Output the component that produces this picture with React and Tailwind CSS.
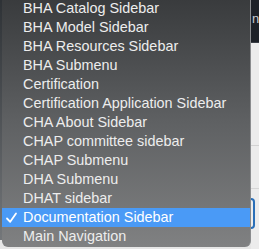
import React from "react";

const items = [
  "BHA Catalog Sidebar",
  "BHA Model Sidebar",
  "BHA Resources Sidebar",
  "BHA Submenu",
  "Certification",
  "Certification Application Sidebar",
  "CHA About Sidebar",
  "CHAP committee sidebar",
  "CHAP Submenu",
  "DHA Submenu",
  "DHAT sidebar",
  "Documentation Sidebar",
  "Main Navigation",
];

const selected = "Documentation Sidebar";

const Check = () => (
  <svg
    width="14"
    height="19"
    viewBox="0 0 14 19"
    className="absolute left-[3px] top-0"
    fill="none"
  >
    <polyline
      points="2,10.5 5.2,13.8 11,5.5"
      stroke="#ffffff"
      strokeWidth="1.8"
      strokeLinecap="round"
      strokeLinejoin="round"
    />
  </svg>
);

const App = () => {
  return (
    <div className="w-[259px] h-[249px] overflow-hidden bg-[#e6e6e6] flex font-['Liberation_Sans',Arial,sans-serif]">
      {/* strip left of the menu */}
      <div className="w-[2px] h-[240px] bg-gradient-to-b from-[#2e3236] to-[#74777a]" />

      {/* popup menu */}
      <div className="w-[249px] h-[248px] -mt-px pb-px flex flex-col rounded-b-[6px] bg-gradient-to-b from-[#393b3d] via-[#5f6163] to-[#808182] border-r border-[#8a8c8e] overflow-hidden">
        {items.map((item) => {
          const active = item === selected;
          return (
            <div
              key={item}
              className={`relative h-[19px] shrink-0 pl-[21px] text-[14.4px] leading-[19px] whitespace-nowrap ${
                active ? "bg-[#4a9af6] text-white" : "text-[#ededed]"
              }`}
            >
              {active && <Check />}
              {item}
            </div>
          );
        })}
      </div>

      {/* page behind, right of the menu */}
      <div className="w-[8px] flex flex-col">
        <div className="h-[43px] bg-[#1d2127] border-b border-[#3a3f46] overflow-hidden pt-[12px] pl-px">
          <span className="block text-[13px] leading-[14px] text-[#c8ccd2]">n</span>
        </div>
        <div className="flex-1 flex flex-col bg-[#ececec]">
          <div className="h-[103px] border-b border-[#d2d2d2]" />
          <div className="h-[43px] border-b border-[#d6d6d6]" />
          <div className="h-[9px]" />
          <div className="h-[31px] w-[4px] border-2 border-l-0 border-[#2a6fb8] rounded-r-[4px]" />
        </div>
      </div>
    </div>
  );
};

export default App;
